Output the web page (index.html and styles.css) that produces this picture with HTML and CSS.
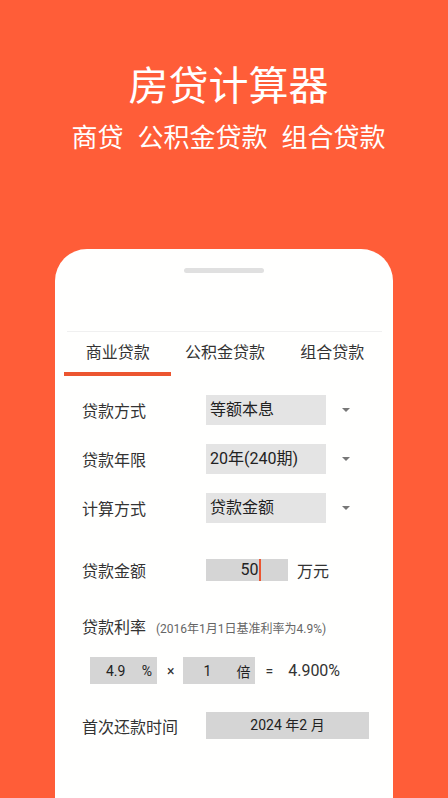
FILE: index.html
```html
<!DOCTYPE html>
<html lang="zh">
<head>
<meta charset="utf-8">
<title>房贷计算器</title>
<link rel="stylesheet" href="styles.css">
</head>
<body>
<header class="hero">
  <h1 class="title">房贷计算器</h1>
  <p class="subtitle"><span>商贷</span><span>公积金贷款</span><span>组合贷款</span></p>
</header>
<main class="phone">
  <div class="handle"></div>
  <div class="topbar"></div>
  <nav class="tabs">
    <div class="tab active">商业贷款</div>
    <div class="tab">公积金贷款</div>
    <div class="tab">组合贷款</div>
  </nav>
  <section class="form">
    <div class="row">
      <span class="label">贷款方式</span>
      <span class="select">等额本息</span>
      <span class="arrow"></span>
    </div>
    <div class="row">
      <span class="label">贷款年限</span>
      <span class="select">20年(240期)</span>
      <span class="arrow"></span>
    </div>
    <div class="row">
      <span class="label">计算方式</span>
      <span class="select">贷款金额</span>
      <span class="arrow"></span>
    </div>
    <div class="row amount-row">
      <span class="label">贷款金额</span>
      <span class="input amount">50<i class="cursor"></i></span>
      <span class="unit">万元</span>
    </div>
    <div class="rate-title">
      <span class="label-inline">贷款利率</span>
      <span class="note">(2016年1月1日基准利率为4.9%)</span>
    </div>
    <div class="rate-row">
      <span class="input rate"><span>4.9</span><span>%</span></span>
      <span class="op times">×</span>
      <span class="input mult"><span>1</span><span>倍</span></span>
      <span class="op eq">=</span>
      <span class="result">4.900%</span>
    </div>
    <div class="row date-row">
      <span class="label">首次还款时间</span>
      <span class="input date">2024 年2 月</span>
    </div>
  </section>
</main>
</body>
</html>
```
FILE: styles.css
```css
html, body {
  margin: 0;
  padding: 0;
}
body {
  width: 448px;
  height: 798px;
  overflow: hidden;
  background: #ff5d38;
  font-family: Roboto, "Noto Sans CJK SC", "Noto Sans", sans-serif;
  display: flex;
  flex-direction: column;
}
.hero {
  padding: 59px 0 0 9px;
  text-align: center;
  color: #fff;
}
.title {
  margin: 0;
  font-family: "Noto Sans CJK SC", sans-serif;
  font-size: 40px;
  font-weight: 400;
  line-height: 48px;
}
.subtitle {
  margin: 14px 0 0;
  font-family: "Noto Sans CJK SC", sans-serif;
  font-size: 26px;
  line-height: 30px;
  display: flex;
  justify-content: center;
  gap: 14px;
}
.phone {
  margin: 98px auto 0;
  width: 338px;
  flex: 1;
  background: #fffffe;
  border-radius: 32px 32px 0 0;
  display: flex;
  flex-direction: column;
}
.handle {
  margin: 19px auto 0;
  width: 80px;
  height: 5px;
  border-radius: 3px;
  background: #e0e0e0;
}
.topbar {
  height: 58px;
  margin: 0 11px 0 12px;
  border-bottom: 1px solid #f0f0f0;
}
.tabs {
  display: flex;
  margin: 0 7px 0 9px;
}
.tab {
  flex: 1;
  box-sizing: border-box;
  height: 44px;
  padding-top: 10px;
  line-height: 22px;
  text-align: center;
  font-size: 16px;
  color: #333;
  border-bottom: 4px solid transparent;
}
.tab.active {
  border-bottom-color: #ec5530;
}
.form {
  padding: 19px 0 0 27px;
  display: flex;
  flex-direction: column;
}
.row {
  display: flex;
  align-items: center;
  height: 30px;
  margin-bottom: 19px;
}
.label {
  width: 124px;
  font-size: 16px;
  color: #333;
}
.select {
  box-sizing: border-box;
  width: 120px;
  height: 30px;
  line-height: 30px;
  padding-left: 4px;
  background: #e4e4e4;
  font-size: 16px;
  color: #222;
}
.arrow {
  margin-left: 16px;
  width: 0;
  height: 0;
  border-left: 4px solid transparent;
  border-right: 4px solid transparent;
  border-top: 4px solid #777;
}
.amount-row {
  margin-top: 13px;
  margin-bottom: 0;
}
.input {
  box-sizing: border-box;
  background: #d5d5d5;
  color: #222;
}
.amount {
  width: 82px;
  height: 22px;
  line-height: 22px;
  font-size: 16px;
  text-align: center;
  padding-left: 8px;
  display: flex;
  justify-content: center;
  align-items: center;
}
.cursor {
  display: inline-block;
  width: 2px;
  height: 22px;
  margin-left: 1px;
  background: #ec5530;
}
.unit {
  margin-left: 9px;
  font-size: 16px;
  color: #333;
}
.rate-title {
  margin-top: 31px;
  line-height: 24px;
  display: flex;
  align-items: baseline;
  gap: 10px;
}
.label-inline {
  font-size: 16px;
  color: #333;
}
.note {
  font-size: 12px;
  color: #666;
}
.rate-row {
  margin-top: 16px;
  display: flex;
  align-items: center;
  padding-left: 8px;
  font-size: 14px;
}
.rate, .mult {
  height: 27px;
  display: flex;
  align-items: center;
  justify-content: space-between;
}
.rate {
  width: 67px;
  padding: 0 5px 0 16px;
}
.mult {
  width: 72px;
  padding: 0 5px 0 20px;
}
.op {
  color: #333;
  font-size: 14px;
}
.times {
  margin: 0 9px 0 10px;
}
.eq {
  margin: 0 15px 0 10px;
}
.result {
  font-size: 16px;
  color: #333;
}
.date-row {
  margin-top: 28px;
  height: 27px;
}
.date {
  width: 163px;
  height: 27px;
  line-height: 27px;
  text-align: center;
  font-size: 14px;
}
```
